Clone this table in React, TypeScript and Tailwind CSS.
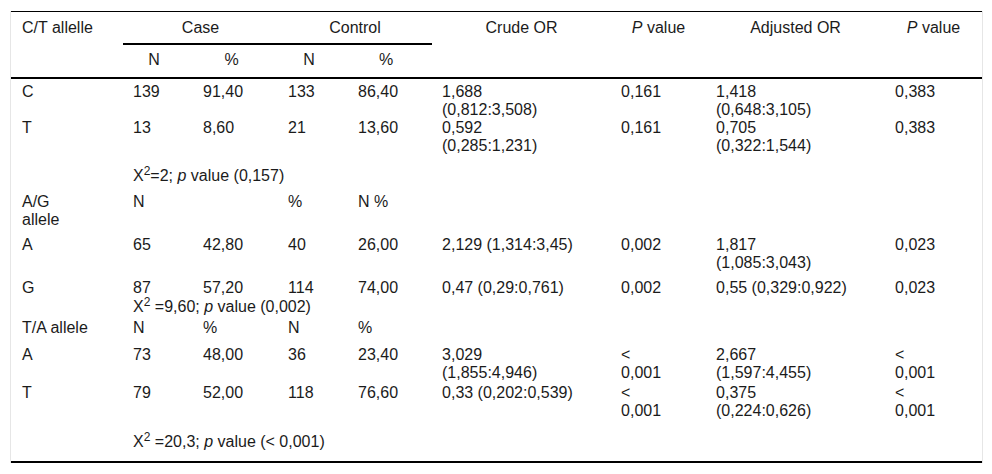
import React from "react";

type Cell = React.ReactNode;

const X2 = ({ pre, rest }: { pre: string; rest: React.ReactNode }) => (
  <>
    X<sup>2</sup>
    {pre}
    <i>p</i> value {rest}
  </>
);

const br = (a: string, b: string) => (
  <>
    {a}
    <br />
    {b}
  </>
);

// each row: height of the tr (px), cells
const rows: { h: string; pt?: string; cells: Cell[]; span?: boolean }[] = [
  {
    h: "h-[40px]",
    pt: "pt-[4px]",
    cells: ["C", "139", "91,40", "133", "86,40", br("1,688", "(0,812:3,508)"), "0,161", br("1,418", "(0,648:3,105)"), "0,383"],
  },
  {
    h: "h-[48px]",
    cells: ["T", "13", "8,60", "21", "13,60", br("0,592", "(0,285:1,231)"), "0,161", br("0,705", "(0,322:1,544)"), "0,383"],
  },
  { h: "h-[26px]", span: true, cells: ["", <X2 pre="=2; " rest="(0,157)" />] },
  { h: "h-[43px]", cells: [br("A/G", "allele"), "N", "", "%", "N %", "", "", "", ""] },
  {
    h: "h-[43px]",
    cells: ["A", "65", "42,80", "40", "26,00", "2,129 (1,314:3,45)", "0,002", br("1,817", "(1,085:3,043)"), "0,023"],
  },
  {
    h: "h-[19px]",
    cells: ["G", "87", "57,20", "114", "74,00", "0,47 (0,29:0,761)", "0,002", "0,55 (0,329:0,922)", "0,023"],
  },
  { h: "h-[21px]", span: true, cells: ["", <X2 pre=" =9,60; " rest="(0,002)" />] },
  { h: "h-[27px]", cells: ["T/A allele", "N", "%", "N", "%", "", "", "", ""] },
  {
    h: "h-[38px]",
    cells: ["A", "73", "48,00", "36", "23,40", br("3,029", "(1,855:4,946)"), br("<", "0,001"), br("2,667", "(1,597:4,455)"), br("<", "0,001")],
  },
  {
    h: "h-[49px]",
    cells: ["T", "79", "52,00", "118", "76,60", "0,33 (0,202:0,539)", br("<", "0,001"), br("0,375", "(0,224:0,626)"), br("<", "0,001")],
  },
  { h: "h-[28px]", span: true, cells: ["", <X2 pre=" =20,3; " rest="(< 0,001)" />] },
];

const widths = ["w-[112px]", "w-[70px]", "w-[85px]", "w-[70px]", "w-[84px]", "w-[179px]", "w-[95px]", "w-[179px]", "w-[97px]"];

export default function App() {
  return (
    <div className="bg-white w-[992px] h-[474px] pt-[11px] text-[16px] leading-[18px] text-[#1b1b1b] font-['Liberation_Sans',Arial,sans-serif]">
      <div className="ml-[10px] w-[973px] border-x border-[#e6e6e6]">
        <table className="w-[971px] table-fixed border-separate border-spacing-0 border-t border-b-2 border-black">
          <colgroup>
            {widths.map((w, i) => (
              <col key={i} className={w} />
            ))}
          </colgroup>
          <thead>
            <tr className="h-[33px]">
              <th rowSpan={2} className="align-top text-left font-normal pl-[11px] pt-[7px] border-b-2 border-black">
                C/T allelle
              </th>
              <th colSpan={2} className="align-top font-normal pt-[7px] border-b-2 border-black">
                Case
              </th>
              <th colSpan={2} className="align-top font-normal pt-[7px] border-b-2 border-black">
                Control
              </th>
              <th rowSpan={2} className="align-top font-normal pt-[7px] border-b-2 border-black">
                Crude OR
              </th>
              <th rowSpan={2} className="align-top font-normal pt-[7px] border-b-2 border-black">
                <i>P</i> value
              </th>
              <th rowSpan={2} className="align-top font-normal pt-[7px] border-b-2 border-black">
                Adjusted OR
              </th>
              <th rowSpan={2} className="align-top font-normal pt-[7px] border-b-2 border-black">
                <i>P</i> value
              </th>
            </tr>
            <tr className="h-[34px]">
              {["N", "%", "N", "%"].map((t, i) => (
                <th key={i} className="align-top font-normal pt-[6px] pr-[8px] border-b-2 border-black">
                  {t}
                </th>
              ))}
            </tr>
          </thead>
          <tbody>
            {rows.map((r, ri) => (
              <tr key={ri} className={r.h}>
                {r.span ? (
                  <>
                    <td className={`align-top p-0 ${r.pt ?? ""}`} />
                    <td colSpan={8} className={`align-top pl-[10px] whitespace-nowrap ${r.pt ?? ""}`}>
                      {r.cells[1]}
                    </td>
                  </>
                ) : (
                  r.cells.map((c, ci) => (
                    <td
                      key={ci}
                      className={`align-top whitespace-nowrap ${ci === 0 ? "pl-[11px]" : "pl-[10px]"} ${r.pt ?? ""}`}
                    >
                      {c}
                    </td>
                  ))
                )}
              </tr>
            ))}
          </tbody>
        </table>
      </div>
    </div>
  );
}
